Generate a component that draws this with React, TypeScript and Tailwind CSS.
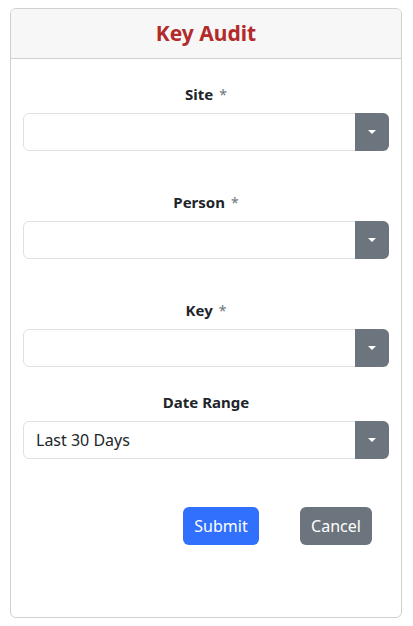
type Field = { label: string; required?: boolean; value?: string; gap: string };

const fields: Field[] = [
  { label: "Site", required: true, gap: "mb-[39px]" },
  { label: "Person", required: true, gap: "mb-[39px]" },
  { label: "Key", required: true, gap: "mb-[23px]" },
  { label: "Date Range", value: "Last 30 Days", gap: "mb-[48px]" },
];

function SelectBox({ value }: { value?: string }) {
  return (
    <div className="flex h-[38px] w-full rounded-[6px] border border-[#dee2e6] bg-white">
      <div className="flex flex-1 items-center pl-3 text-[16px] text-[#212529]">
        {value}
      </div>
      <div className="-my-px -mr-px flex w-[34px] items-center justify-center rounded-r-[6px] bg-[#6c757d]">
        <span className="h-0 w-0 border-x-[4px] border-t-[4px] border-x-transparent border-t-white" />
      </div>
    </div>
  );
}

export default function App() {
  return (
    <div
      className="min-h-[626px] bg-white pl-[10px] pr-[11px] pt-[8px]"
      style={{ fontFamily: '"Noto Sans", "Open Sans", sans-serif' }}
    >
      <div className="flex h-[610px] flex-col overflow-hidden rounded-[6px] border border-[#d0d0d0]">
        <div className="flex h-[50px] items-center justify-center border-b border-[#d0d0d0] bg-[#f7f7f7]">
          <h1 className="text-[21px] font-bold text-[#b22a2a]">Key Audit</h1>
        </div>
        <div className="flex flex-col px-[12px] pt-[23px]">
          {fields.map((f) => (
            <div key={f.label} className={f.gap}>
              <div className="mb-[7px] flex h-[24px] items-center justify-center text-[15px] font-bold text-[#212529]">
                {f.label}
                {f.required && (
                  <span className="ml-[6px] text-[14px] font-normal text-[#6c757d]">*</span>
                )}
              </div>
              <SelectBox value={f.value} />
            </div>
          ))}
          <div className="flex pl-[160px]">
            <button className="h-[38px] w-[76px] rounded-[6px] bg-[#3170fd] text-[16px] text-white">
              Submit
            </button>
            <button className="ml-[41px] h-[38px] w-[72px] rounded-[6px] bg-[#6c757d] text-[16px] text-white">
              Cancel
            </button>
          </div>
        </div>
      </div>
    </div>
  );
}
